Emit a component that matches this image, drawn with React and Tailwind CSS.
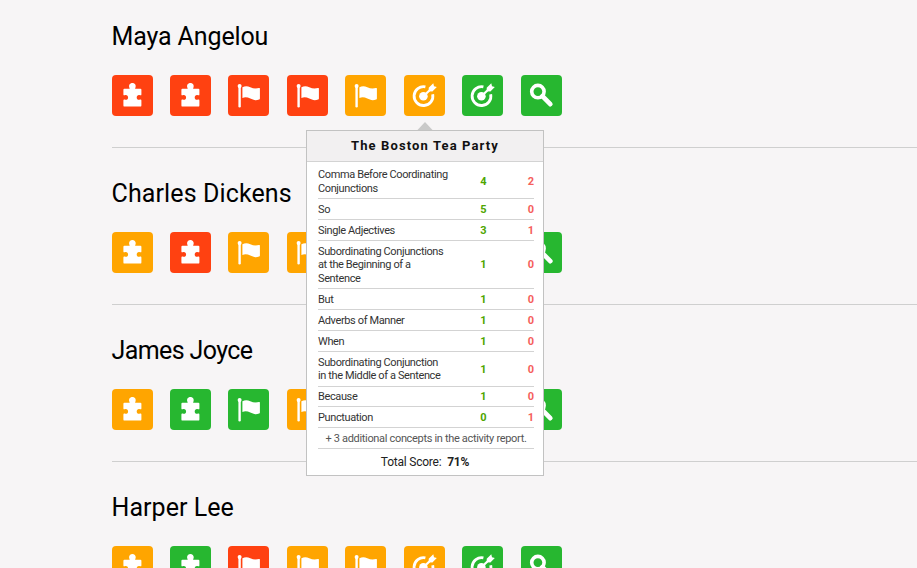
const TONES = { r: 'bg-[#ff4111]', o: 'bg-[#ffa500]', g: 'bg-[#27b730]' };

function Glyph({ kind }) {
  return (
    <svg viewBox="0 0 41 41" className="block h-[41px] w-[41px]" fill="#fff">
      {kind === 'puzzle' && (
        <path d="M12.4 13.8H17.2C17.9 13.8 17.7 13.2 17.3 12.4C16.5 10.2 18 8 20.4 8S24.3 10.2 23.5 12.4C23.1 13.2 22.9 13.8 23.6 13.8H28.4Q29.4 13.8 29.4 14.8V19.4Q29.4 20.6 28 20.2C26.2 19.5 24.7 20.6 24.7 22.4S26.2 25.2 28 24.6Q29.4 24.2 29.4 25.4V30.4Q29.4 31.6 28.2 31.6H12.6Q11.4 31.6 11.4 30.4V25.4Q11.4 24.2 12.8 24.6C14.6 25.2 16.1 24.2 16.1 22.4S14.6 19.5 12.8 20.2Q11.4 20.6 11.4 19.4V14.8Q11.4 13.8 12.4 13.8Z" />
      )}
      {kind === 'flag' && (
        <>
          <circle cx="11.6" cy="11" r="2" />
          <rect x="10.4" y="11" width="2.4" height="21.4" rx="1.2" />
          <path d="M14.4 12.2C17 10.9 19.5 10.9 22.3 12.2C25.2 13.6 28 13.8 31 13Q31.9 12.7 31.9 13.6V23.4Q31.9 24.2 31.1 24.5C27.8 25.8 25 25 22.3 23.6C19.5 22.2 17.2 22 14.4 22.9Z" />
        </>
      )}
      {kind === 'target' && (
        <>
          <path d="M21.4 11.9A9.4 9.4 0 1 0 28.7 19.2" fill="none" stroke="#fff" strokeWidth="2.8" />
          <circle cx="19.4" cy="21.3" r="4.3" />
          <path d="M19.4 21.3L28 13" stroke="#fff" strokeWidth="2.2" />
          <path d="M24.7 12.7L29.3 8.3L30 11.2L32.8 12L28.4 16.5L24.8 16.3Z" />
        </>
      )}
      {kind === 'search' && (
        <>
          <circle cx="16.9" cy="16.6" r="6.2" fill="none" stroke="#fff" strokeWidth="3.6" />
          <path d="M21.4 21.2L29.3 29.2" stroke="#fff" strokeWidth="4.7" strokeLinecap="round" />
        </>
      )}
    </svg>
  );
}

const KINDS = ['puzzle', 'puzzle', 'flag', 'flag', 'flag', 'target', 'target', 'search'];

const STUDENTS = [
  { name: 'Maya Angelou', tones: 'rrrroogg', spacing: 'tracking-[-0.12px]' },
  { name: 'Charles Dickens', tones: 'oroooogg', spacing: 'tracking-[0.12px]' },
  { name: 'James Joyce', tones: 'oggooogg', spacing: 'tracking-[-0.6px]' },
  { name: 'Harper Lee', tones: 'ogrooogg', spacing: 'tracking-[0.05px]' },
];

const CONCEPTS = [
  { lines: ['Comma Before Coordinating', 'Conjunctions'], right: 4, wrong: 2 },
  { lines: ['So'], right: 5, wrong: 0 },
  { lines: ['Single Adjectives'], right: 3, wrong: 1 },
  { lines: ['Subordinating Conjunctions', 'at the Beginning of a', 'Sentence'], right: 1, wrong: 0 },
  { lines: ['But'], right: 1, wrong: 0 },
  { lines: ['Adverbs of Manner'], right: 1, wrong: 0 },
  { lines: ['When'], right: 1, wrong: 0 },
  { lines: ['Subordinating Conjunction', 'in the Middle of a Sentence'], right: 1, wrong: 0 },
  { lines: ['Because'], right: 1, wrong: 0 },
  { lines: ['Punctuation'], right: 0, wrong: 1 },
];

function Tooltip() {
  return (
    <div className="absolute left-[306px] top-[122px] w-[238px]">
      <svg viewBox="0 0 16 8" className="ml-[111px] block h-2 w-4">
        <path d="M0.5 8L8 0L15.5 8Z" fill="#c9c9c9" />
      </svg>
      <div className="h-[346px] border border-[#c2c2c2] bg-white">
        <div className="flex h-[31px] items-center justify-center border-b border-[#d3d3d3] bg-[#f2f0f1] text-[13px] font-bold tracking-[1.12px] text-[#111]">
          The Boston Tea Party
        </div>
        <div className="ml-[11px] mr-[9px] pt-[2.5px] text-[11px] leading-[13.85px] text-[#333]">
          {CONCEPTS.map((c) => (
            <div key={c.lines[0]} className="flex items-center border-b border-[#d3d3d3] pb-[2.2px] pt-[3.8px]">
              <div className="w-[150px] whitespace-nowrap tracking-[-0.38px]">
                {c.lines.map((line) => (
                  <div key={line}>{line}</div>
                ))}
              </div>
              <div className="w-[31px] text-center font-bold text-[#4ea500]">{c.right}</div>
              <div className="flex-1 text-right font-bold text-[#f5605c]">{c.wrong}</div>
            </div>
          ))}
          <div className="whitespace-nowrap border-b border-[#d3d3d3] pb-[2.2px] pt-[3.8px] text-center tracking-[-0.33px] text-[#555]">
            + 3 additional concepts in the activity report.
          </div>
        </div>
        <div className="pt-[5.5px] text-center text-[12px] leading-[16px] tracking-[-0.22px] text-[#222]">
          Total Score: <span className="ml-[3px] font-bold">71%</span>
        </div>
      </div>
    </div>
  );
}

export default function App() {
  return (
    <div className="relative h-[568px] w-[917px] overflow-hidden bg-[#f7f5f6] font-['Roboto','Liberation_Sans',sans-serif] text-black">
      <div className="pl-[111.5px]">
        {STUDENTS.map((s) => (
          <section key={s.name} className="h-[157px]">
            <div className="flex h-[148px] flex-col border-b border-[#cfcfcf]">
              <h2 className={'h-[75px] pt-[21px] text-[25px] leading-[32px] ' + s.spacing}>{s.name}</h2>
              <div className="flex gap-[17.45px]">
                {KINDS.map((kind, i) => (
                  <div key={i} className={'h-[41px] w-[41px] rounded-[4px] ' + TONES[s.tones[i]]}>
                    <Glyph kind={kind} />
                  </div>
                ))}
              </div>
            </div>
          </section>
        ))}
      </div>
      <Tooltip />
    </div>
  );
}
